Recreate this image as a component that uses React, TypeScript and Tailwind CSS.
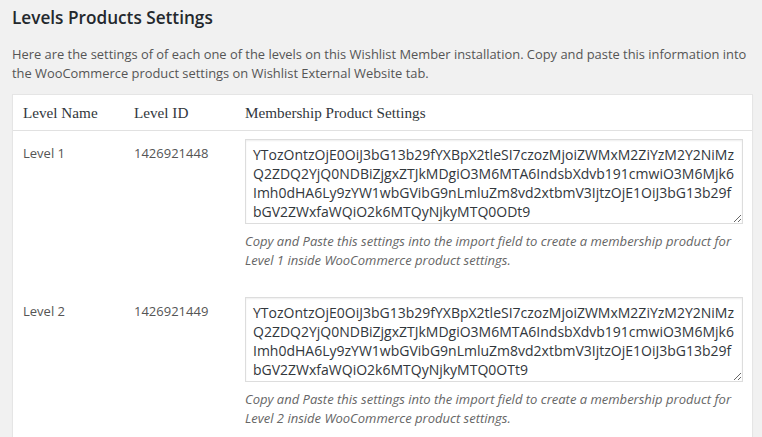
const levels = [
  {
    name: 'Level 1',
    id: '1426921448',
    lines: [
      'YTozOntzOjE0OiJ3bG13b29fYXBpX2tleSI7czozMjoiZWMxM2ZiYzM2Y2NiMz',
      'Q2ZDQ2YjQ0NDBiZjgxZTJkMDgiO3M6MTA6IndsbXdvb191cmwiO3M6Mjk6',
      'Imh0dHA6Ly9zYW1wbGVibG9nLmluZm8vd2xtbmV3IjtzOjE1OiJ3bG13b29f',
      'bGV2ZWxfaWQiO2k6MTQyNjkyMTQ0ODt9',
    ],
  },
  {
    name: 'Level 2',
    id: '1426921449',
    lines: [
      'YTozOntzOjE0OiJ3bG13b29fYXBpX2tleSI7czozMjoiZWMxM2ZiYzM2Y2NiMz',
      'Q2ZDQ2YjQ0NDBiZjgxZTJkMDgiO3M6MTA6IndsbXdvb191cmwiO3M6Mjk6',
      'Imh0dHA6Ly9zYW1wbGVibG9nLmluZm8vd2xtbmV3IjtzOjE1OiJ3bG13b29f',
      'bGV2ZWxfaWQiO2k6MTQyNjkyMTQ0OTt9',
    ],
  },
];

export default function App() {
  return (
    <div className="min-h-screen bg-[#f1f1f1] pl-3 pr-[9px] pt-[6px] font-['Open_Sans',sans-serif] text-[#444]">
      <h2 className="text-[17.2px] font-semibold leading-[24px] text-[#23282d]">Levels Products Settings</h2>
      <p className="mt-[15px] text-[12.9px] leading-[19px] text-[#555]">
        Here are the settings of of each one of the levels on this Wishlist Member installation. Copy and paste this information into
        the WooCommerce product settings on Wishlist External Website tab.
      </p>

      <div className="mt-[11px] border border-[#e5e5e5] bg-white shadow-[0_1px_1px_rgba(0,0,0,0.04)]">
        <div className="grid grid-cols-[111px_111px_1fr] border-b border-[#e1e1e1] font-['Liberation_Serif',serif] text-[15.2px] leading-[35px] text-[#32373c]">
          <div className="pl-[10px]">Level Name</div>
          <div className="pl-[10px]">Level ID</div>
          <div className="pl-[10px]">Membership Product Settings</div>
        </div>

        {levels.map((lvl) => (
          <div key={lvl.id} className="grid grid-cols-[111px_111px_1fr] pt-[8px] pb-[19px] text-[13px] text-[#555]">
            <div className="pl-[10px] pt-[5px] leading-[19px]">{lvl.name}</div>
            <div className="pl-[10px] pt-[5px] leading-[19px]">{lvl.id}</div>
            <div className="pl-[10px] pr-[9px]">
              <textarea
                readOnly
                value={lvl.lines.join('\n')}
                className="block h-[85px] w-full resize-y whitespace-pre border border-[#ddd] bg-white pl-[7px] pt-[5px] text-[14px] leading-[19px] text-[#32373c] shadow-[inset_0_1px_2px_rgba(0,0,0,0.07)] outline-none"
              />
              <p className="mt-[8px] text-[13px] italic leading-[19px] text-[#666]">
                Copy and Paste this settings into the import field to create a membership product for
                <br />
                {lvl.name} inside WooCommerce product settings.
              </p>
            </div>
          </div>
        ))}
      </div>
    </div>
  );
}
